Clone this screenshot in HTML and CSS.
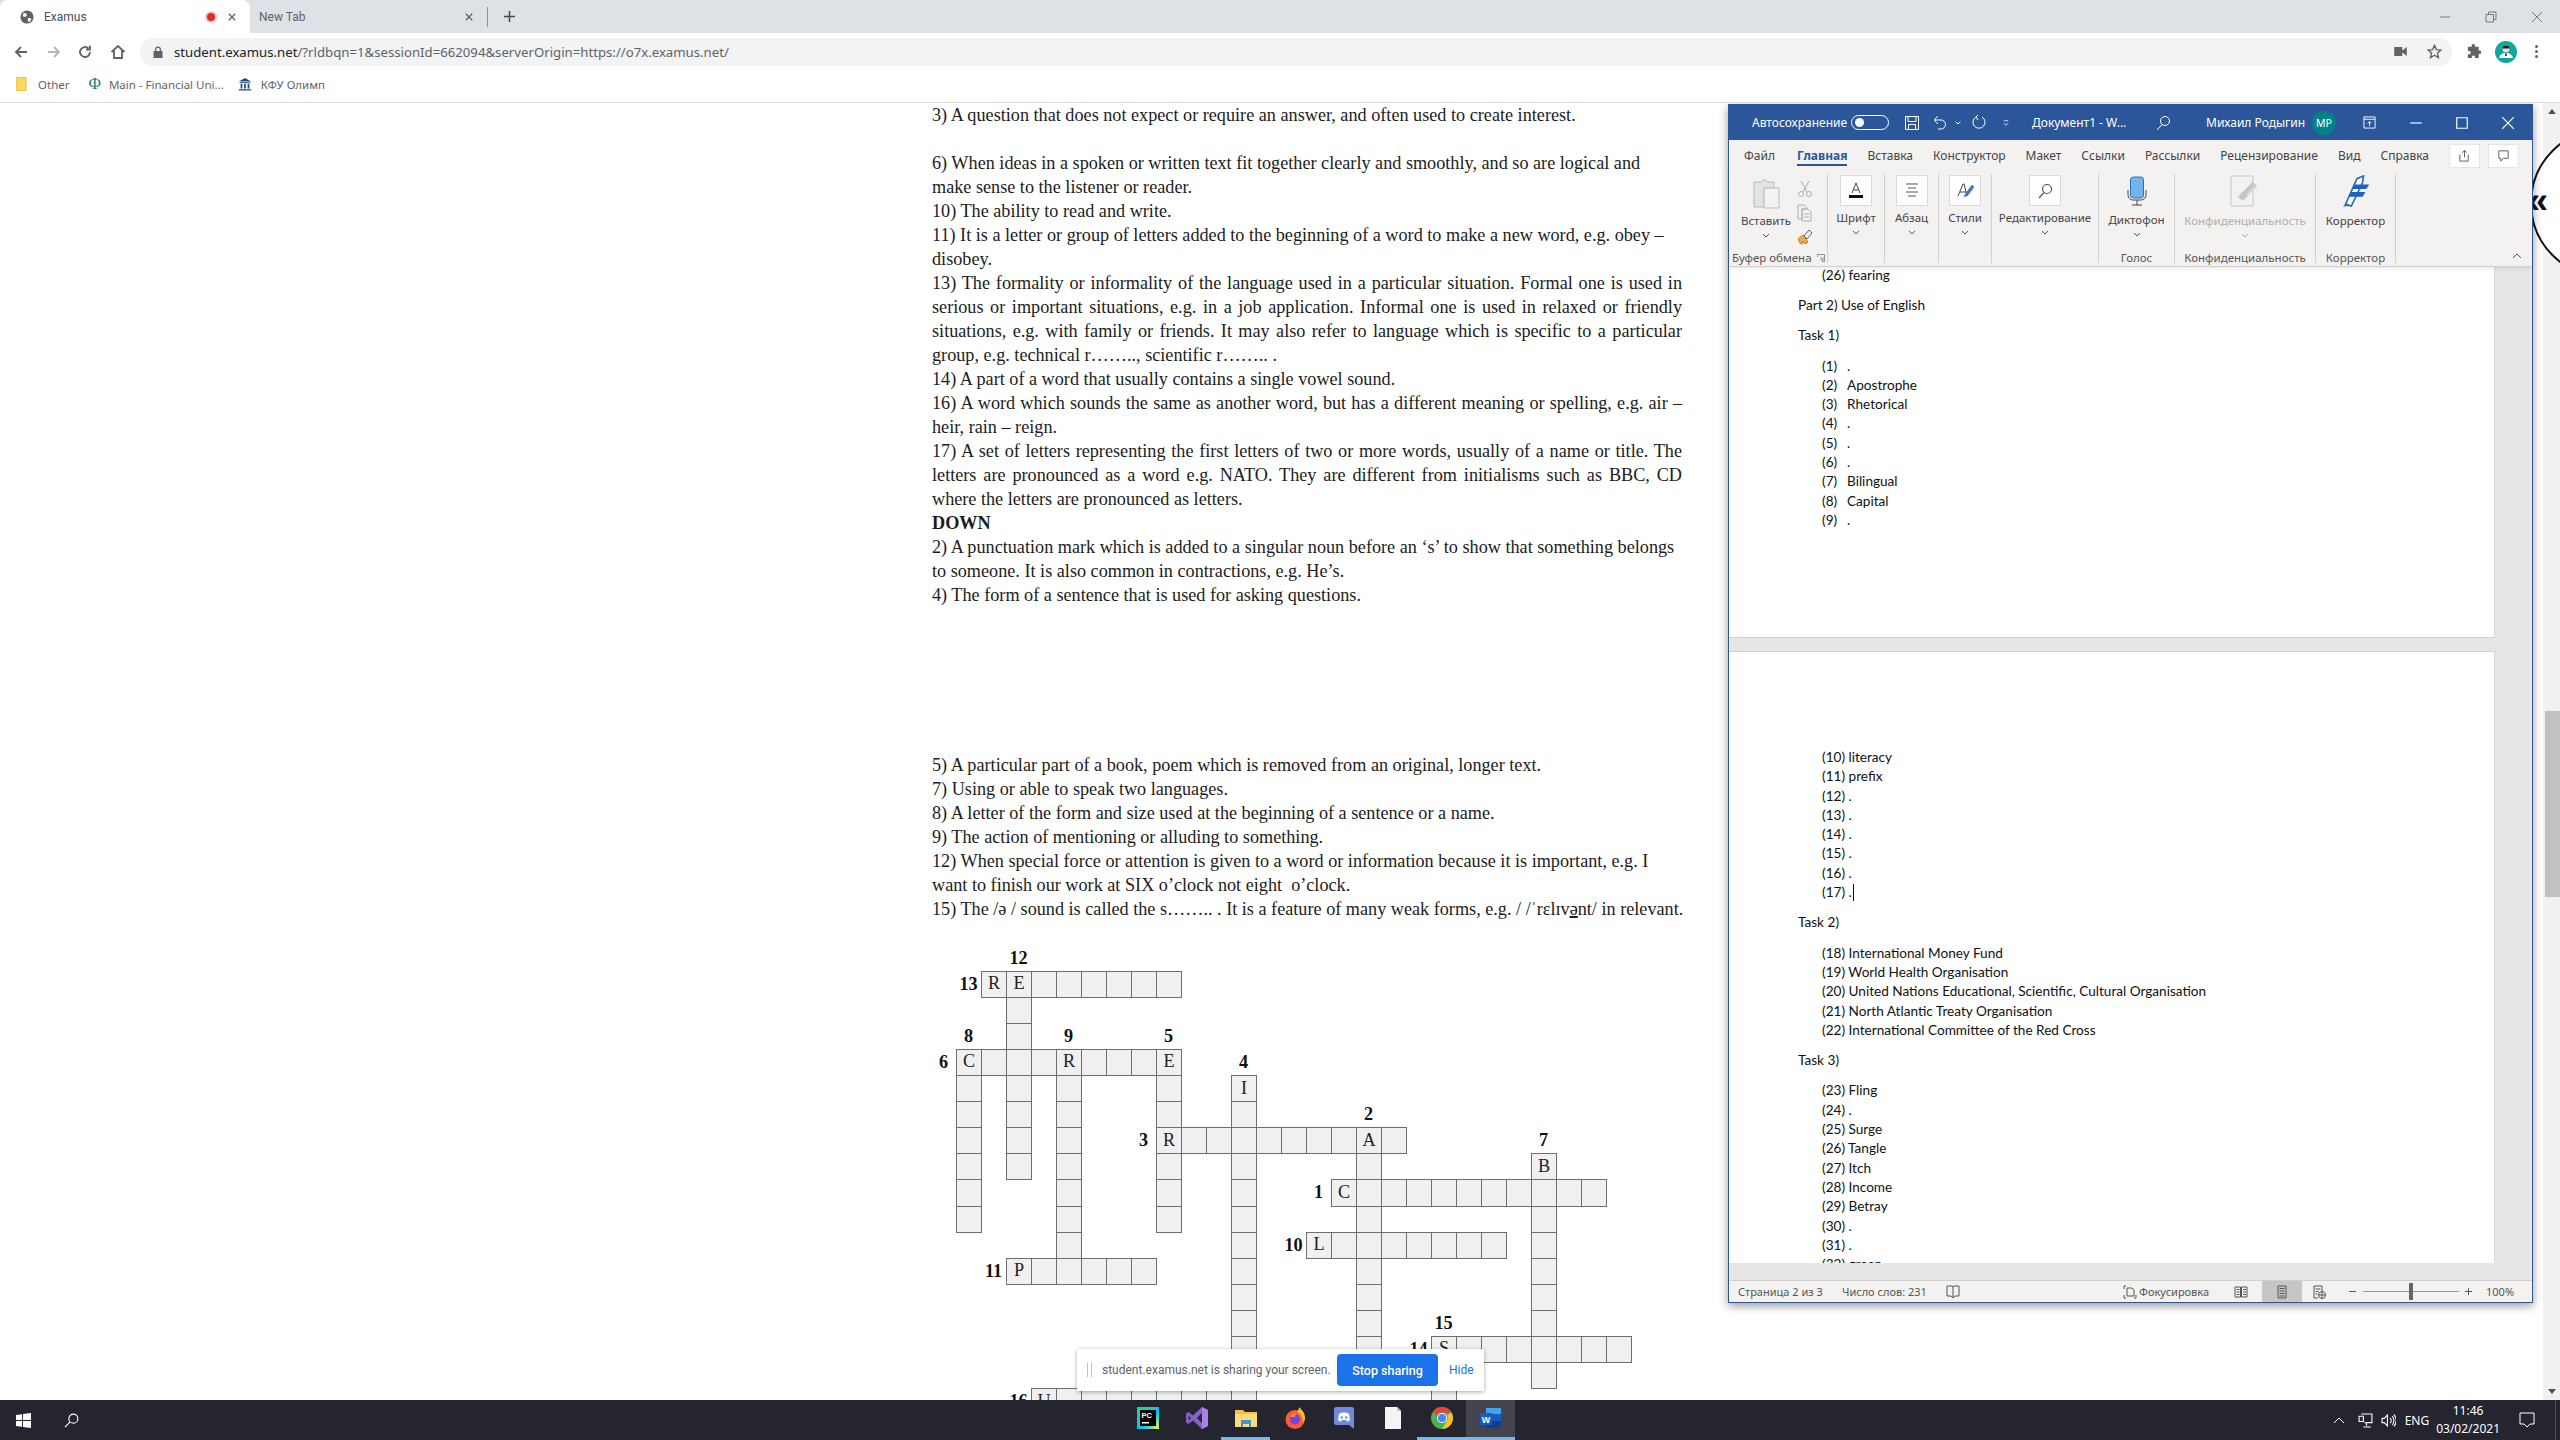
FILE: index.html
```html
<!DOCTYPE html>
<html lang="en">
<head>
<meta charset="utf-8">
<title>Examus</title>
<link rel="stylesheet" href="styles.css">
</head>
<body>
<header class="browser">
  <div class="tabstrip">
    <div class="tab tab-active">
      <svg class="fav" viewBox="0 0 16 16"><circle cx="8" cy="8" r="7.5" fill="#5f6368"/><path d="M4 3l3 1 1 2-2 2-3-1zM9 9l3 0 1 2-3 3-1-2z" fill="#fff"/></svg>
      <span class="tab-title">Examus</span>
      <span class="rec"></span>
      <svg class="tab-x" viewBox="0 0 10 10"><path d="M1 1l8 8M9 1l-8 8"/></svg>
    </div>
    <div class="tab tab-idle">
      <span class="tab-title">New Tab</span>
      <svg class="tab-x" viewBox="0 0 10 10"><path d="M1 1l8 8M9 1l-8 8"/></svg>
    </div>
    <span class="tab-sep"></span>
    <svg class="tab-plus" viewBox="0 0 12 12"><path d="M6 0v12M0 6h12"/></svg>
    <div class="winctl">
      <svg viewBox="0 0 12 12"><path d="M1 6h10"/></svg>
      <svg viewBox="0 0 12 12"><path d="M1 3.5h7.5V11H1zM3.5 3.5V1H11v7.5H8.5"/></svg>
      <svg viewBox="0 0 12 12"><path d="M1 1l10 10M11 1L1 11"/></svg>
    </div>
  </div>
  <div class="toolbar">
    <svg class="nav nav-back" viewBox="0 0 16 16"><path d="M14 8H3M8 3L3 8l5 5"/></svg>
    <svg class="nav nav-fwd" viewBox="0 0 16 16"><path d="M2 8h11M8 3l5 5-5 5"/></svg>
    <svg class="nav nav-reload" viewBox="0 0 16 16"><path d="M13 8a5 5 0 1 1-1.5-3.6M13 1.5v4h-4"/></svg>
    <svg class="nav nav-home" viewBox="0 0 16 16"><path d="M1.5 8L8 2l6.500 6M4 6.500V14h8V6.500"/></svg>
    <div class="omnibox">
      <svg class="lock" viewBox="0 0 10 12"><path d="M2 5V3.500a3 3 0 0 1 6 0V5h1.500v7h-9V5zM3.200 5h3.600V3.500a1.800 1.800 0 0 0-3.600 0z"/></svg>
      <span class="url"><b>student.examus.net</b>/?rldbqn=1&amp;sessionId=662094&amp;serverOrigin=https://o7x.examus.net/</span>
      <span class="omni-end">
        <svg class="cam" viewBox="0 0 14 10"><path d="M0 0h9v10H0zM9 4l5-4v10L9 6z"/></svg>
        <svg class="star" viewBox="0 0 16 16"><path d="M8 1.500l2 4.500 4.800.5-3.600 3.200 1 4.800L8 12l-4.200 2.500 1-4.800L1.200 6.500 6 6z"/></svg>
      </span>
    </div>
    <svg class="puzzle" viewBox="0 0 16 16"><path d="M6 1.500a1.800 1.800 0 0 1 3.500 0V3h4v4h1.200a1.800 1.800 0 0 1 0 3.600H13.500V15H9.700v-1.300a1.800 1.800 0 0 0-3.500 0V15H2v-4h1.300a1.800 1.800 0 0 0 0-3.600H2V3h4z"/></svg>
    <svg class="profile" viewBox="0 0 22 22"><circle cx="11" cy="11" r="11" fill="#12a79d"/><circle cx="11" cy="8" r="3.500" fill="#f4d9c4"/><path d="M7.500 7.500a3.500 3 0 0 1 7 0z" fill="#222"/><path d="M4 17c1-4 4-5 7-5s6 1 7 5z" fill="#fff"/><path d="M10.500 12h1l.5 3h-2z" fill="#333"/></svg>
    <span class="kebab"><i></i><i></i><i></i></span>
  </div>
  <nav class="bookmarks">
    <span class="bm">
      <svg class="bm-ico" viewBox="0 0 12 16"><path d="M0 1h11v14H0z" fill="#fdd663" stroke="#e8b93a"/></svg>Other</span>
    <span class="bm">
      <span class="phi">Φ</span>Main - Financial Uni...</span>
    <span class="bm">
      <svg class="bm-ico bank" viewBox="0 0 16 16"><path d="M8 1l7 4H1zM2 6h12v1H2zM3 8h2v5H3zM7 8h2v5H7zM11 8h2v5h-2zM1 14h14v1.500H1z" fill="#1f4e79"/></svg>КФУ Олимп</span>
  </nav>
</header>

<main class="viewport">
  <div class="paper">
    <div class="qtext">
      <p>3) A question that does not expect or require an answer, and often used to create interest.</p>
      <p class="blank">&nbsp;</p>
      <p>6) When ideas in a spoken or written text fit together clearly and smoothly, and so are logical and<br>make sense to the listener or reader.</p>
      <p>10) The ability to read and write.</p>
      <p>11) It is a letter or group of letters added to the beginning of a word to make a new word, e.g. obey –<br>disobey.</p>
      <p class="just">13) The formality or informality of the language used in a particular situation. Formal one is used in serious or important situations, e.g. in a job application. Informal one is used in relaxed or friendly situations, e.g. with family or friends. It may also refer to language which is specific to a particular group, e.g. technical r…….., scientific r…….. .</p>
      <p>14) A part of a word that usually contains a single vowel sound.</p>
      <p class="just">16) A word which sounds the same as another word, but has a different meaning or spelling, e.g. air – heir, rain – reign.</p>
      <p class="just">17) A set of letters representing the first letters of two or more words, usually of a name or title. The letters are pronounced as a word e.g. NATO. They are different from initialisms such as BBC, CD where the letters are pronounced as letters.</p>
      <p class="head">DOWN</p>
      <p>2) A punctuation mark which is added to a singular noun before an ‘s’ to show that something belongs<br>to someone. It is also common in contractions, e.g. He’s.</p>
      <p>4) The form of a sentence that is used for asking questions.</p>
    </div>
    <div class="qtext qtext-second">
      <p>5) A particular part of a book, poem which is removed from an original, longer text.</p>
      <p>7) Using or able to speak two languages.</p>
      <p>8) A letter of the form and size used at the beginning of a sentence or a name.</p>
      <p>9) The action of mentioning or alluding to something.</p>
      <p>12) When special force or attention is given to a word or information because it is important, e.g. I<br>want to finish our work at SIX o’clock not eight&nbsp; o’clock.</p>
      <p class="nowrap">15) The /ə / sound is called the s…….. . It is a feature of many weak forms, e.g. / /ˈrɛlɪv<u>ə</u>nt/ in relevant.</p>
    </div>
    <div class="crossword" id="crossword"></div>
  </div>

  <aside class="pagescroll">
    <span class="arrow arrow-up"></span>
    <span class="thumb"></span>
    <span class="arrow arrow-down"></span>
  </aside>

  <div class="peek"><span class="peek-ring"></span><span class="peek-mark">«</span></div>

  <section class="word">
    <div class="w-title">
      <span class="w-auto">Автосохранение</span>
      <span class="toggle"><i></i></span>
      <svg class="wi wi-lg wi-save" viewBox="0 0 16 16"><path d="M1.500 1.500h13v13h-13zM4 1.500v5h8v-5M4.500 14.500v-5h7v5"/></svg>
      <svg class="wi wi-lg wi-undo" viewBox="0 0 16 16"><path d="M6 1L2 5l4 4M2 5h7a4.500 4.500 0 0 1 0 9H6"/></svg>
      <svg class="wi-mini wi-undod" viewBox="0 0 6 4"><path d="M.5.500L3 3 5.500.500"/></svg>
      <svg class="wi wi-lg wi-redo" viewBox="0 0 16 16"><path d="M5 2a6 6 0 1 0 6 0M7 0l-2 2 2 3"/></svg>
      <svg class="wi-mini wi-cust" viewBox="0 0 8 8"><path d="M1 1h6M1 4l3 3 3-3"/></svg>
      <span class="w-doc">Документ1 - W...</span>
      <svg class="wi wi-lg wi-search" viewBox="0 0 16 16"><circle cx="10" cy="6" r="4.500"/><path d="M7 9.500L2 15"/></svg>
      <span class="w-user">Михаил Родыгин</span>
      <span class="w-avatar">МР</span>
      <svg class="wi wi-disp" viewBox="0 0 14 14"><path d="M1 1h12v12H1zM1 3.500h12M7 11V6M5 8l2-2 2 2"/></svg>
      <svg class="wi wi-min" viewBox="0 0 12 12"><path d="M1 6h10"/></svg>
      <svg class="wi wi-max" viewBox="0 0 12 12"><path d="M1.500 1.500h9v9h-9z"/></svg>
      <svg class="wi wi-close" viewBox="0 0 12 12"><path d="M1 1l10 10M11 1L1 11"/></svg>
    </div>
    <div class="w-tabs">
      <span>Файл</span><span class="w-tab-on">Главная</span><span>Вставка</span><span>Конструктор</span><span>Макет</span><span>Ссылки</span><span>Рассылки</span><span>Рецензирование</span><span>Вид</span><span>Справка</span>
      <span class="w-tabbtns">
        <span class="w-tabbtn"><svg viewBox="0 0 14 14"><path d="M2 6v7h9V6M7 9V2M4.500 4L7 1.500 9.500 4" /></svg></span>
        <span class="w-tabbtn"><svg viewBox="0 0 14 14"><path d="M2 2h10v8H7l-3 3v-3H2z"/></svg></span>
      </span>
    </div>
    <div class="ribbon">
      <div class="grp grp-clip">
        <div class="grp-body clip">
          <div class="paste">
            <svg class="paste-ico" viewBox="0 0 28 30"><path d="M2 3h7l2-2h3l2 2h6v6H12v19H2z" fill="#e4e3e2" stroke="#bdbbb9"/><path d="M12 9h15v20H12z" fill="#f3f2f1" stroke="#bdbbb9"/></svg>
            <span class="rb-label">Вставить</span>
            <svg class="chev" viewBox="0 0 8 5"><path d="M1 1l3 3 3-3"/></svg>
          </div>
          <div class="clip-tools">
            <svg viewBox="0 0 16 18"><path d="M4 1l6 11M12 1L6 12" fill="none" stroke="#b0aeac"/><circle cx="4" cy="14" r="2.500" fill="none" stroke="#b0aeac"/><circle cx="12" cy="14" r="2.500" fill="none" stroke="#b0aeac"/></svg>
            <svg viewBox="0 0 16 18"><path d="M1 1h6l3 3v1H5v10H1zM5 5h6l3 3v9H5z" fill="#f3f2f1" stroke="#b0aeac"/><path d="M7 10h5M7 13h5" stroke="#b0aeac"/></svg>
            <svg viewBox="0 0 16 18"><path d="M1 11l5-4 5 7-3 2-2-3-1 3-2-1z" fill="#edab4f" stroke="#c47d1d"/><path d="M7 8l5-6 3 3-5 6z" fill="#f3f2f1" stroke="#666"/></svg>
          </div>
        </div>
        <div class="grp-label grp-label-clip">Буфер обмена <svg class="launch" viewBox="0 0 8 8"><path d="M.5 3V.5H7.500V7.500H5M3 3l3 3M6 3.500V6H3.500"/></svg></div>
      </div>
      <div class="grp grp-font">
        <div class="grp-body">
          <span class="rb-box"><svg viewBox="0 0 18 18"><path d="M5 11L9 1l4 10M6.500 8h5" fill="none" stroke="#444"/><path d="M2 13h14v3H2z" fill="#111"/></svg></span>
          <span class="rb-label">Шрифт</span>
          <svg class="chev" viewBox="0 0 8 5"><path d="M1 1l3 3 3-3"/></svg>
        </div>
      </div>
      <div class="grp grp-para">
        <div class="grp-body">
          <span class="rb-box"><svg viewBox="0 0 18 18"><path d="M3 2h12M5 6h8M3 10h12M5 14h8" fill="none" stroke="#555"/></svg></span>
          <span class="rb-label">Абзац</span>
          <svg class="chev" viewBox="0 0 8 5"><path d="M1 1l3 3 3-3"/></svg>
        </div>
      </div>
      <div class="grp grp-style">
        <div class="grp-body">
          <span class="rb-box"><svg viewBox="0 0 18 18"><path d="M2 14L7 2h1l3 12M4 10h6" fill="none" stroke="#444"/><path d="M16 3l-6 8-2 4 4-2 6-8z" fill="#3f7fbd" stroke="#2b579a" stroke-width=".5"/></svg></span>
          <span class="rb-label">Стили</span>
          <svg class="chev" viewBox="0 0 8 5"><path d="M1 1l3 3 3-3"/></svg>
        </div>
      </div>
      <div class="grp grp-edit">
        <div class="grp-body">
          <span class="rb-box"><svg viewBox="0 0 18 18"><circle cx="11" cy="7" r="4.500" fill="none" stroke="#555" stroke-width="1.200"/><path d="M8 10.500L3 16" stroke="#555" stroke-width="1.200"/></svg></span>
          <span class="rb-label">Редактирование</span>
          <svg class="chev" viewBox="0 0 8 5"><path d="M1 1l3 3 3-3"/></svg>
        </div>
      </div>
      <div class="grp grp-voice">
        <div class="grp-body">
          <svg class="mic" viewBox="0 0 20 30"><rect x="3.500" y="1" width="13" height="21" rx="3" fill="#74b4ee" stroke="#2b6fb6"/><path d="M1 14v5a5 5 0 0 0 5 5h8a5 5 0 0 0 5-5v-5M10 24v5M5 29h10" fill="none" stroke="#444"/></svg>
          <span class="rb-label rb-label-low">Диктофон</span>
          <svg class="chev" viewBox="0 0 8 5"><path d="M1 1l3 3 3-3"/></svg>
        </div>
        <div class="grp-label">Голос</div>
      </div>
      <div class="grp grp-priv">
        <div class="grp-body dim">
          <svg class="priv" viewBox="0 0 30 32"><path d="M1 1h22v30H1z" fill="#f3f2f1" stroke="#c8c6c4"/><path d="M8 22L22 6l5 5-14 15z" fill="#c8c6c4"/><path d="M13 16l9-9M17 20l8-9" stroke="#f3f2f1"/></svg>
          <span class="rb-label rb-label-low">Конфиденциальность</span>
          <svg class="chev" viewBox="0 0 8 5"><path d="M1 1l3 3 3-3"/></svg>
        </div>
        <div class="grp-label">Конфиденциальность</div>
      </div>
      <div class="grp grp-editor">
        <div class="grp-body">
          <svg class="pen" viewBox="0 0 30 34"><path d="M4 31L16 4l7-3-1 7L10 33z" fill="#fff" stroke="#2b6fb6" stroke-width="1.800"/><path d="M14 10h15l-3 5H11zM10 18h15l-3 5H7z" fill="#1f5fbf"/><path d="M1 33.500l3-3 5 2.500z" fill="#2b6fb6"/></svg>
          <span class="rb-label rb-label-low">Корректор</span>
        </div>
        <div class="grp-label">Корректор</div>
      </div>
      <svg class="collapse" viewBox="0 0 10 6"><path d="M1 5l4-4 4 4"/></svg>
    </div>
    <div class="w-canvas">
      <div class="w-pages">
        <div class="w-page w-page-one">
          <p class="item">(26) fearing</p>
          <p class="wh">Part 2) Use of English</p>
          <p class="wh">Task 1)</p>
          <div class="list">
            <p class="item"><span class="num">(1)</span>.</p>
            <p class="item"><span class="num">(2)</span>Apostrophe</p>
            <p class="item"><span class="num">(3)</span>Rhetorical</p>
            <p class="item"><span class="num">(4)</span>.</p>
            <p class="item"><span class="num">(5)</span>.</p>
            <p class="item"><span class="num">(6)</span>.</p>
            <p class="item"><span class="num">(7)</span>Bilingual</p>
            <p class="item"><span class="num">(8)</span>Capital</p>
            <p class="item"><span class="num">(9)</span>.</p>
          </div>
        </div>
        <div class="w-page w-page-two">
          <div class="list list-first">
            <p class="item">(10) literacy</p>
            <p class="item">(11) prefix</p>
            <p class="item">(12) .</p>
            <p class="item">(13) .</p>
            <p class="item">(14) .</p>
            <p class="item">(15) .</p>
            <p class="item">(16) .</p>
            <p class="item">(17) .<span class="caret"></span></p>
          </div>
          <p class="wh">Task 2)</p>
          <div class="list">
            <p class="item">(18) International Money Fund</p>
            <p class="item">(19) World Health Organisation</p>
            <p class="item">(20) United Nations Educational, Scientific, Cultural Organisation</p>
            <p class="item">(21) North Atlantic Treaty Organisation</p>
            <p class="item">(22) International Committee of the Red Cross</p>
          </div>
          <p class="wh">Task 3)</p>
          <div class="list">
            <p class="item">(23) Fling</p>
            <p class="item">(24) .</p>
            <p class="item">(25) Surge</p>
            <p class="item">(26) Tangle</p>
            <p class="item">(27) Itch</p>
            <p class="item">(28) Income</p>
            <p class="item">(29) Betray</p>
            <p class="item">(30) .</p>
            <p class="item">(31) .</p>
            <p class="item">(32) green</p>
          </div>
        </div>
      </div>
    </div>
    <footer class="w-status">
      <span class="st-page">Страница 2 из 3</span>
      <span class="st-words">Число слов: 231</span>
      <svg class="st-ico st-book" viewBox="0 0 14 14"><path d="M1 1h5l1 1 1-1h5v10H9l-2 2-2-2H1zM7 2v11"/></svg>
      <svg class="st-ico st-focus" viewBox="0 0 14 14"><path d="M4 3h5l2 2v6H4zM1 4V1h2M1 10v3h2M13 10v3h-2"/></svg>
      <span class="st-focus-t">Фокусировка</span>
      <svg class="st-ico st-read" viewBox="0 0 14 14"><path d="M1 2h5.500v10H1zM7.500 2H13v10H7.500zM2.500 4.500h3M2.500 7h3M2.500 9.500h3M9 4.500h3M9 7h3M9 9.500h3"/></svg>
      <span class="st-print"><svg class="st-ico" viewBox="0 0 14 14"><path d="M3 1h8v12H3zM4.500 3.500h5M4.500 6h5M4.500 8.500h5M4.500 11h5"/></svg></span>
      <svg class="st-ico st-web" viewBox="0 0 14 14"><path d="M2 1h8v5M2 1v12h4M3.500 4h5M3.500 6.500h3M3.500 9h2"/><circle cx="10" cy="10" r="3.500"/><path d="M6.500 10h7M10 6.500v7"/></svg>
      <span class="zoom-minus"></span>
      <span class="zoom-track"><i></i></span>
      <span class="zoom-plus"></span>
      <span class="st-pct">100%</span>
    </footer>
  </section>

  <div class="sharebar">
    <span class="grip"><i></i><i></i></span>
    <span class="share-text">student.examus.net is sharing your screen.</span>
    <span class="share-stop">Stop sharing</span>
    <span class="share-hide">Hide</span>
  </div>
</main>

<footer class="taskbar">
  <svg class="tb-win" viewBox="0 0 16 16"><path d="M0 2.200L6.500 1.300v6.200H0zM7.500 1.100L16 0v7.500H7.500zM0 8.500h6.500v6.200L0 13.800zM7.500 8.500H16V16l-8.500-1.100z" fill="#fff"/></svg>
  <svg class="tb-search" viewBox="0 0 16 16"><circle cx="10" cy="6" r="4.800" fill="none" stroke="#fff" stroke-width="1.200"/><path d="M6.500 9.500L1 15" stroke="#fff" stroke-width="1.200"/></svg>
  <div class="tb-apps">
    <span class="tb-app"><svg viewBox="0 0 22 22"><defs><linearGradient id="pcg" x1="0" y1="0" x2="1" y2="1"><stop offset="0" stop-color="#21d789"/><stop offset=".6" stop-color="#07c3f2"/><stop offset="1" stop-color="#fcf84a"/></linearGradient></defs><path d="M0 0h22v22H0z" fill="url(#pcg)"/><path d="M3 3h16v16H3z" fill="#000"/><text x="4.500" y="11" class="pc-text">PC</text><path d="M5 15h7v1.500H5z" fill="#fff"/></svg></span>
    <span class="tb-app"><svg viewBox="0 0 22 22"><path d="M16 0l6 3v16l-6 3L7 13.500 2.500 17 0 15.500v-9L2.500 5 7 8.500z" fill="#8661c5"/><path d="M16 6l-5 5 5 5zM2.500 8.500v5L5 11z" fill="#2a2a35"/><path d="M16 0l6 3v16l-6 3z" fill="#a982e6"/><path d="M16 6l-5 5 5 5z" fill="#2a2a35"/></svg></span>
    <span class="tb-app tb-on"><svg viewBox="0 0 22 22"><path d="M0 3h8l2 2h12v15H0z" fill="#f5c242"/><path d="M0 7h22v13H0z" fill="#fcdb78"/><path d="M6 13h10v7h-2v-3H8v3H6z" fill="#3a96dd"/></svg></span>
    <span class="tb-app"><svg viewBox="0 0 22 22"><circle cx="11" cy="12.500" r="9.500" fill="#ff5a36"/><path d="M15 0c3 3 6 6 6 11 0 2-1 4-2 5 0-6-3-10-6-11 1-2 2-3 2-5z" fill="#ffbd2e"/><circle cx="11" cy="12.500" r="5" fill="#7542e5"/><path d="M6 9c2-3 6-3 8-2-3 0-4 2-3 3-2 0-3 0-5-1z" fill="#ff9640"/></svg></span>
    <span class="tb-app"><svg viewBox="0 0 22 22"><path d="M3 0h16a2 2 0 0 1 2 2v20l-5-4H3a2 2 0 0 1-2-2V2a2 2 0 0 1 2-2z" fill="#7289da"/><path d="M6 7c3-2 7-2 10 0l1 6c-1 1-2 1.500-3 1.500l-1-1.500H9l-1 1.500C7 14.500 6 14 5 13z" fill="#fff"/><circle cx="8.800" cy="10.500" r="1.300" fill="#7289da"/><circle cx="13.200" cy="10.500" r="1.300" fill="#7289da"/></svg></span>
    <span class="tb-app"><svg viewBox="0 0 22 22"><path d="M3 0h12l4 4v18H3z" fill="#f4f4f4"/><path d="M15 0v4h4z" fill="#c8c8c8"/></svg></span>
    <span class="tb-app tb-on tb-chrome"><svg viewBox="0 0 22 22"><circle cx="11" cy="11" r="11" fill="#4caf50"/><path d="M11 0a11 11 0 0 1 9.500 5.500H11a5.500 5.500 0 0 0-5 3L2.200 4.400A11 11 0 0 1 11 0z" fill="#ea4335"/><path d="M20.500 5.500A11 11 0 0 1 11 22l4.800-8.200A5.500 5.500 0 0 0 16 8z" fill="#fbc02d"/><circle cx="11" cy="11" r="5" fill="#fff"/><circle cx="11" cy="11" r="4" fill="#4285f4"/></svg></span>
    <span class="tb-app tb-on tb-active"><svg viewBox="0 0 22 22"><path d="M6 1h15v20H6z" fill="#2b7cd3"/><path d="M6 1h15v6H6z" fill="#41a5ee"/><path d="M6 14h15v7H6z" fill="#103f91"/><path d="M6 7h15v7H6z" fill="#185abd"/><path d="M0 6h12v12H0z" fill="#185abd"/><text x="1.800" y="15.500" class="w-text">W</text></svg></span>
  </div>
  <div class="tray">
    <svg class="tr tr-up" viewBox="0 0 12 8"><path d="M1 7l5-5 5 5"/></svg>
    <svg class="tr tr-net" viewBox="0 0 14 14"><path d="M3 1h10v8H6M1 3h4v5H1zM8 9v3M5 13h7"/></svg>
    <svg class="tr tr-vol" viewBox="0 0 14 14"><path d="M1 5h2l3-3v10L3 9H1zM8.500 4.500a3.500 3.500 0 0 1 0 5M10.500 3a6 6 0 0 1 0 8M12 1.500a8 8 0 0 1 0 11"/></svg>
    <span class="tr-lang">ENG</span>
    <span class="tr-clock"><span>11:46</span><span>03/02/2021</span></span>
    <svg class="tr tr-notif" viewBox="0 0 16 16"><path d="M1 1h14v11h-4l-3 3-3-3H1z"/></svg>
    <span class="tr-desk"></span>
  </div>
</footer>
<script src="crossword.js"></script>
</body>
</html>
```
FILE: styles.css
```css
* { box-sizing: border-box; }
html, body { margin: 0; padding: 0; }
body {
  width: 2560px; height: 1440px; overflow: hidden;
  display: flex; flex-direction: column;
  background: #fff;
  font-family: "Noto Sans", "Open Sans", sans-serif;
}
p { margin: 0; }
svg { display: block; flex: none; }

/* ---------- browser chrome ---------- */
.browser { flex: none; height: 103px; border-bottom: 1px solid #dadce0; }
.tabstrip { height: 33px; background: #dee1e6; display: flex; align-items: stretch; }
.tab { width: 250px; display: flex; align-items: center; font: 12px Roboto, sans-serif; color: #5f6368; }
.tab-active { background: #fff; border-radius: 8px 8px 0 0; padding-left: 20px; color: #4a4d52; }
.tab-idle { width: 237px; padding-left: 9px; }
.fav { width: 14px; height: 14px; margin-right: 10px; }
.tab-title { flex: 1; }
.rec { width: 12px; height: 12px; border-radius: 50%; background: #d93025; border: 2px solid #f8c4c0; box-shadow: inset 0 0 0 1px #d93025; margin-right: 11px; }
.tab-x { width: 8px; height: 8px; margin-right: 14px; fill: none; stroke: #5f6368; stroke-width: 1.600; }
.tab-sep { width: 1px; height: 20px; background: #8f9399; align-self: center; }
.tab-plus { width: 11px; height: 11px; align-self: center; margin-left: 16px; fill: none; stroke: #45484d; stroke-width: 1.600; }
.winctl { margin-left: auto; margin-right: 17px; display: flex; gap: 34px; align-items: center; }
.winctl svg { width: 12px; height: 12px; fill: none; stroke: #77797d; stroke-width: 1; }

.toolbar { height: 33px; display: flex; align-items: center; position: relative; padding-top: 4px; }
.nav { width: 16px; height: 16px; fill: none; stroke: #5f6368; stroke-width: 1.800; }
.nav-back { margin-left: 13px; }
.nav-fwd { margin-left: 17px; stroke: #b4b6b9; }
.nav-reload { margin-left: 15px; }
.nav-home { margin-left: 17px; }
.omnibox {
  margin-left: 14px; width: 2312px; height: 28px; border-radius: 14px; background: #f1f3f4;
  display: flex; align-items: center; padding-left: 13px; font-size: 13.200px; color: #5f6368;
}
.lock { width: 10px; height: 12px; fill: #5f6368; margin-right: 11px; }
.url b { font-weight: 400; color: #202124; }
.omni-end { margin-left: auto; display: flex; align-items: center; gap: 20px; margin-right: 10px; }
.cam { width: 13px; height: 9px; fill: #5f6368; }
.star { width: 15px; height: 15px; fill: none; stroke: #5f6368; stroke-width: 1.500; }
.puzzle { width: 15px; height: 15px; fill: #5f6368; margin-left: 14px; }
.profile { width: 22px; height: 22px; margin-left: 14px; }
.kebab { margin-left: 18px; display: flex; flex-direction: column; gap: 2px; }
.kebab i { width: 3px; height: 3px; border-radius: 50%; background: #5f6368; }

.bookmarks { height: 36px; display: flex; align-items: center; padding-left: 16px; font-size: 11.500px; color: #5f6368; gap: 14px; }
.bm { display: flex; align-items: center; }
.bm-ico { width: 11px; height: 16px; margin-right: 11px; }
.bank { width: 14px; height: 14px; margin-right: 9px; }
.phi { font-family: "Liberation Serif", serif; font-size: 17px; color: #1a7f72; margin-right: 8px; margin-left: 5px; }

/* ---------- viewport and document ---------- */
.viewport { flex: 1; position: relative; overflow: hidden; display: flex; min-height: 0; }
.paper { flex: 1; min-width: 0; padding: 0 0 0 932px; color: #1c1c1c; font: 18.200px/24px "Liberation Serif", serif; }
.qtext { width: 750px; }
.qtext-second { margin-top: 146px; }
.just { text-align: justify; }
.nowrap { white-space: nowrap; }
.head { font-weight: 700; }
.qtext u { text-decoration-thickness: 1.500px; }

.crossword {
  margin-top: 23.600px;
  margin-left: -1px;
  display: grid;
  grid-template-columns: repeat(29, 25px);
  grid-auto-rows: 26.100px;
  width: 725px;
}
.cell {
  background: #f0f0f0; border: 1px solid #6e6e6e;
  margin: 0 -1px -1px 0;
  display: flex; align-items: center; justify-content: center;
  font-size: 18.200px; line-height: 1; color: #222; padding-bottom: 2px;
}
.label { display: flex; align-items: center; justify-content: center; font-weight: 700; font-size: 18.200px; color: #111; }

.pagescroll { flex: none; width: 17px; background: #f1f1f1; position: relative; display: flex; flex-direction: column; align-items: center; justify-content: space-between; padding: 6px 0; }
.arrow { width: 0; height: 0; border-left: 4px solid transparent; border-right: 4px solid transparent; }
.arrow-up { border-bottom: 5px solid #505050; }
.arrow-down { border-top: 5px solid #505050; }
.thumb { position: absolute; left: 2px; right: 0; top: 608px; height: 186px; background: #c1c1c1; }

.peek { position: absolute; left: 2520px; top: 40px; width: 40px; height: 120px; overflow: hidden; }
.peek-ring { position: absolute; left: 10px; top: -15px; width: 150px; height: 150px; border: 2px solid #111; border-radius: 50%; background: #fff; }
.peek-mark { position: absolute; left: 8px; top: 38px; font: 700 36px/40px "Liberation Sans", sans-serif; color: #111; }

/* ---------- word window ---------- */
.word {
  position: absolute; left: 1728px; top: 1px; width: 805px; height: 1199px;
  display: flex; flex-direction: column;
  background: #f3f2f1; border: 1px solid #2b579a;
  box-shadow: 0 3px 9px rgba(0,0,0,.4);
  font-size: 12px; color: #333;
}
.w-title { flex: none; height: 35px; background: #2b579a; color: #fff; display: flex; align-items: center; position: relative; font-size: 12px; }
.w-auto { margin-left: 23px; width: 99px; white-space: nowrap; }
.toggle { width: 38px; height: 15px; border: 1px solid #fff; border-radius: 8px; display: flex; align-items: center; padding-left: 3px; }
.toggle i { width: 9px; height: 9px; border-radius: 50%; background: #fff; }
.wi { width: 14px; height: 14px; fill: none; stroke: #fff; stroke-width: 1; }
.wi-lg { width: 16px; height: 16px; }
.wi-mini { width: 6px; height: 6px; fill: none; stroke: #fff; stroke-width: 1; }
.wi-save { margin-left: 15px; }
.wi-undo { margin-left: 12px; }
.wi-undod { margin-left: 7px; }
.wi-redo { margin-left: 10px; }
.wi-cust { margin-left: 16px; }
.w-doc { margin-left: 23px; width: 108px; white-space: nowrap; }
.wi-search { margin-left: 15px; }
.w-user { margin-left: 35px; width: 100px; white-space: nowrap; }
.w-avatar { margin-left: 6px; width: 24px; height: 24px; border-radius: 50%; background: #038387; font-size: 10.500px; display: flex; align-items: center; justify-content: center; }
.wi-disp { margin-left: 27px; width: 13px; height: 13px; }
.wi-min { margin-left: 33px; }
.wi-max { margin-left: 32px; }
.wi-close { margin-left: 32px; }

.w-tabs { flex: none; height: 31px; display: flex; align-items: center; gap: 20px; padding-left: 15px; font-size: 12px; color: #444; white-space: nowrap; }
.w-tab-on { font-weight: 700; color: #2b579a; position: relative; margin-left: 2px; }
.w-tab-on::after { content: ""; position: absolute; left: 0; right: 0; bottom: -2px; height: 2px; background: #2b579a; }
.w-tabbtns { margin-left: auto; display: flex; gap: 8px; margin-right: 13px; }
.w-tabbtn { width: 31px; height: 24px; background: #fff; border: 1px solid #e8e6e4; display: flex; align-items: center; justify-content: center; }
.w-tabbtn svg { width: 13px; height: 13px; fill: none; stroke: #555; stroke-width: 1; }

.ribbon { flex: none; height: 96px; display: flex; padding-top: 3px; position: relative; border-bottom: 1px solid #d2d0ce; box-shadow: 0 2px 3px rgba(0,0,0,.08); z-index: 1; background: #f3f2f1; }
.grp { height: 89px; display: flex; flex-direction: column; border-right: 1px solid #d2d0ce; flex: none; }
.grp-clip { width: 99px; }
.grp-font { width: 57px; }
.grp-para { width: 54px; }
.grp-style { width: 53px; }
.grp-edit { width: 107px; }
.grp-voice { width: 76px; }
.grp-priv { width: 141px; }
.grp-editor { width: 80px; }
.grp-body { flex: 1; display: flex; flex-direction: column; align-items: center; padding-top: 1px; min-height: 0; }
.grp-label { height: 16px; margin-bottom: -3px; text-align: center; font-size: 11.500px; line-height: 16px; color: #555; white-space: nowrap; }
.grp-label-clip { display: flex; align-items: center; padding-left: 3px; gap: 5px; }
.launch { width: 8px; height: 8px; fill: none; stroke: #777; stroke-width: .8; }
.rb-box { width: 32px; height: 31px; background: #fff; border: 1px solid #dcdad8; display: flex; align-items: center; justify-content: center; }
.rb-box svg { width: 18px; height: 18px; }
.rb-label { margin-top: 4px; font-size: 11.500px; line-height: 16px; color: #444; white-space: nowrap; }
.rb-label-low { margin-top: 6px; }
.chev { width: 8px; height: 5px; margin-top: 4px; fill: none; stroke: #555; stroke-width: 1; }
.dim .rb-label { color: #b0aeac; }
.dim .chev { stroke: #b0aeac; }
.mic { width: 20px; height: 30px; margin-top: 1px; }
.priv { width: 30px; height: 32px; }
.pen { width: 30px; height: 32px; }
.clip { flex-direction: row; align-items: flex-start; padding-left: 13px; }
.paste { display: flex; flex-direction: column; align-items: center; width: 48px; }
.paste-ico { width: 28px; height: 30px; margin-top: 4px; }
.paste .rb-label { margin-top: 4px; }
.clip-tools { margin-left: 7px; display: flex; flex-direction: column; gap: 6px; padding-top: 5px; }
.clip-tools svg { width: 16px; height: 18px; }
.collapse { position: absolute; right: 10px; bottom: 7px; width: 10px; height: 6px; fill: none; stroke: #555; stroke-width: 1; }

.w-canvas { flex: 1; min-height: 0; background: #e6e6e6; padding-bottom: 17px; }
.w-pages { height: 100%; overflow: hidden; display: flex; flex-direction: column; gap: 13px; }
.w-page { flex: none; width: 766px; background: #fff; border-bottom: 1px solid #cfcfcf; border-right: 1px solid #d8d8d8; font: 13.600px/19.300px Lato, "Liberation Sans", sans-serif; color: #111; }
.w-page-one { height: 371px; }
.w-page-two { height: 640px; border-top: 1px solid #cfcfcf; padding-top: 96px; }
.item { margin-left: 93px; white-space: nowrap; }
.w-page-one > .item:first-child { margin-top: -1px; }
.wh { margin: 10.700px 0 10.700px 69px; }
.list { margin-top: 11.300px; }
.list-first { margin-top: 0; }
.num { display: inline-block; width: 25px; }
.caret { display: inline-block; width: 1px; height: 17px; background: #111; vertical-align: -4px; margin-left: 1px; }

.w-status { flex: none; height: 22px; display: flex; align-items: center; font-size: 11px; color: #555; border-top: 1px solid #d2d0ce; white-space: nowrap; }
.st-page { margin-left: 9px; width: 104px; }
.st-words { width: 104px; }
.st-ico { width: 14px; height: 14px; fill: none; stroke: #555; stroke-width: 1; }
.st-focus { margin-left: 163px; }
.st-focus-t { margin-left: 2px; width: 70px; }
.st-read { margin-left: 25px; }
.st-print { margin-left: 14px; width: 40px; height: 100%; background: #c8c6c4; display: flex; align-items: center; justify-content: center; }
.st-web { margin-left: 10px; }
.zoom-minus { margin-left: 23px; width: 7px; height: 1px; background: #555; }
.zoom-track { margin-left: 7px; width: 96px; height: 1px; background: #999; position: relative; }
.zoom-track i { position: absolute; left: 46px; top: -8px; width: 4px; height: 17px; background: #666; }
.zoom-plus { margin-left: 6px; width: 7px; height: 7px; background: linear-gradient(#555,#555) center/100% 1px no-repeat, linear-gradient(#555,#555) center/1px 100% no-repeat; }
.st-pct { margin-left: 14px; }

/* ---------- share notice ---------- */
.sharebar {
  position: absolute; left: 1077px; top: 1246px; width: 407px; height: 42px;
  background: #fff; box-shadow: 0 1px 4px rgba(0,0,0,.35);
  display: flex; align-items: center; font: 12px Roboto, sans-serif; color: #5f6368; white-space: nowrap;
}
.grip { margin-left: 10px; display: flex; gap: 3px; }
.grip i { width: 1px; height: 14px; background: #bdc1c6; }
.share-text { margin-left: 10px; width: 235px; }
.share-stop { width: 101px; height: 32px; border-radius: 4px; background: #1a73e8; color: #fff; font-weight: 500; font-size: 12.500px; display: flex; align-items: center; justify-content: center; }
.share-hide { margin-left: 11px; color: #1a73e8; }

/* ---------- taskbar ---------- */
.taskbar { flex: none; height: 40px; background: #25252f; display: flex; align-items: center; color: #fff; position: relative; z-index: 5; }
.tb-win { width: 15px; height: 15px; margin-left: 16px; }
.tb-search { width: 15px; height: 15px; margin-left: 33px; }
.tb-apps { display: flex; height: 100%; margin-left: 1044px; }
.tb-app { width: 49px; height: 100%; display: flex; align-items: center; justify-content: center; padding-bottom: 2px; border-bottom: 3px solid transparent; }
.tb-app svg { width: 22px; height: 22px; }
.tb-on { border-bottom-color: #76b9ed; }
.tb-active { background: #44444e; }
.pc-text { font: 700 7.500px "Liberation Sans", sans-serif; fill: #fff; }
.w-text { font: 700 9px "Liberation Sans", sans-serif; fill: #fff; }
.tray { margin-left: auto; display: flex; align-items: center; height: 100%; }
.tr { fill: none; stroke: #fff; stroke-width: 1; }
.tr-up { width: 12px; height: 8px; }
.tr-net { width: 15px; height: 15px; margin-left: 13px; }
.tr-vol { width: 15px; height: 15px; margin-left: 8px; }
.tr-lang { font-size: 12px; margin-left: 9px; }
.tr-clock { margin-left: 7px; display: flex; flex-direction: column; align-items: center; font-size: 12px; line-height: 18px; }
.tr-notif { width: 16px; height: 16px; margin-left: 19px; }
.tr-desk { margin-left: 20px; width: 1px; height: 100%; background: #555; margin-right: 4px; }
```
FILE: crossword.js
```js
(function () {
  var across = [[0,1,8],[3,0,9],[6,8,10],[8,15,11],[10,14,8],[11,2,6],[14,19,8],[16,3,9]];
  var down = [[0,2,8],[3,0,7],[3,4,9],[3,8,7],[4,11,13],[6,16,10],[7,23,9],[14,19,3]];
  var letters = {"0,1":"R","0,2":"E","3,0":"C","3,4":"R","3,8":"E","4,11":"I","6,8":"R","6,16":"A","7,23":"B","8,15":"C","10,14":"L","11,2":"P","14,19":"S","16,3":"U"};
  var labels = [["12",-1,2],["13",0,0],["8",2,0],["9",2,4],["5",2,8],["6",3,-1],["4",3,11],["2",5,16],["7",6,23],["3",6,7],["1",8,14],["10",10,13],["11",11,1],["15",13,19],["14",14,18],["16",16,2]];
  var root = document.getElementById("crossword");
  var seen = {};
  function place(el, row, col) {
    el.style.gridRow = String(row + 2);
    el.style.gridColumn = String(col + 2);
    root.appendChild(el);
  }
  function cell(row, col) {
    var key = row + "," + col;
    if (seen[key]) return;
    seen[key] = true;
    var el = document.createElement("div");
    el.className = "cell";
    el.textContent = letters[key] || "";
    place(el, row, col);
  }
  across.forEach(function (a) { for (var i = 0; i < a[2]; i++) cell(a[0], a[1] + i); });
  down.forEach(function (d) { for (var i = 0; i < d[2]; i++) cell(d[0] + i, d[1]); });
  labels.forEach(function (l) {
    var el = document.createElement("div");
    el.className = "label";
    el.textContent = l[0];
    place(el, l[1], l[2]);
  });
})();
```
